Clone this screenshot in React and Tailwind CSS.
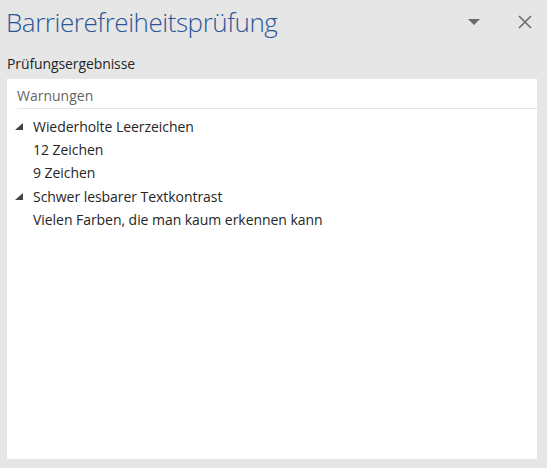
export default function App() {
  const font = { fontFamily: '"Open Sans", "Noto Sans", sans-serif' };
  const Tri = () => (
    <svg width="8" height="7" viewBox="0 0 8 7" className="shrink-0">
      <polygon points="8,0 8,7 0,7" fill="#444444" />
    </svg>
  );
  return (
    <div className="w-[547px] h-[468px] bg-[#e6e6e6] flex flex-col" style={font}>
      <div className="flex items-start h-[48px] pl-[6px] pt-[4px]">
        <div className="text-[26px] leading-[36px] font-light text-[#2b5797] tracking-[-0.45px]">
          Barrierefreiheitsprüfung
        </div>
        <div className="flex-1" />
        <svg width="12" height="7" viewBox="0 0 12 7" className="mt-[15px] mr-[38px]">
          <polygon points="0,0 12,0 6,6" fill="#6b6b6b" />
        </svg>
        <svg width="14" height="14" viewBox="0 0 14 14" className="mt-[11px] mr-[15px]">
          <path d="M1 1 L13 13 M13 1 L1 13" stroke="#6b6b6b" strokeWidth="1.6" />
        </svg>
      </div>
      <div className="pl-[7px] text-[14px] leading-[31px] text-[#262626] tracking-[-0.1px]">Prüfungsergebnisse</div>
      <div className="ml-[7px] mr-[10px] mb-[9px] flex-1 bg-white flex flex-col">
        <div className="ml-[10px] h-[30px] border-b border-[#e3e3e3] text-[14px] leading-[33px] text-[#666666]">
          Warnungen
        </div>
        <div className="pt-[6px] text-[14px] leading-[23px] text-[#262626] tracking-[-0.05px]">
          <div className="flex items-center pl-[8px] gap-[10px]">
            <Tri />
            <span>Wiederholte Leerzeichen</span>
          </div>
          <div className="pl-[26px]">12 Zeichen</div>
          <div className="pl-[26px]">9 Zeichen</div>
          <div className="flex items-center pl-[8px] gap-[10px] pt-[1px]">
            <Tri />
            <span>Schwer lesbarer Textkontrast</span>
          </div>
          <div className="pl-[26px]">Vielen Farben, die man kaum erkennen kann</div>
        </div>
      </div>
    </div>
  );
}
